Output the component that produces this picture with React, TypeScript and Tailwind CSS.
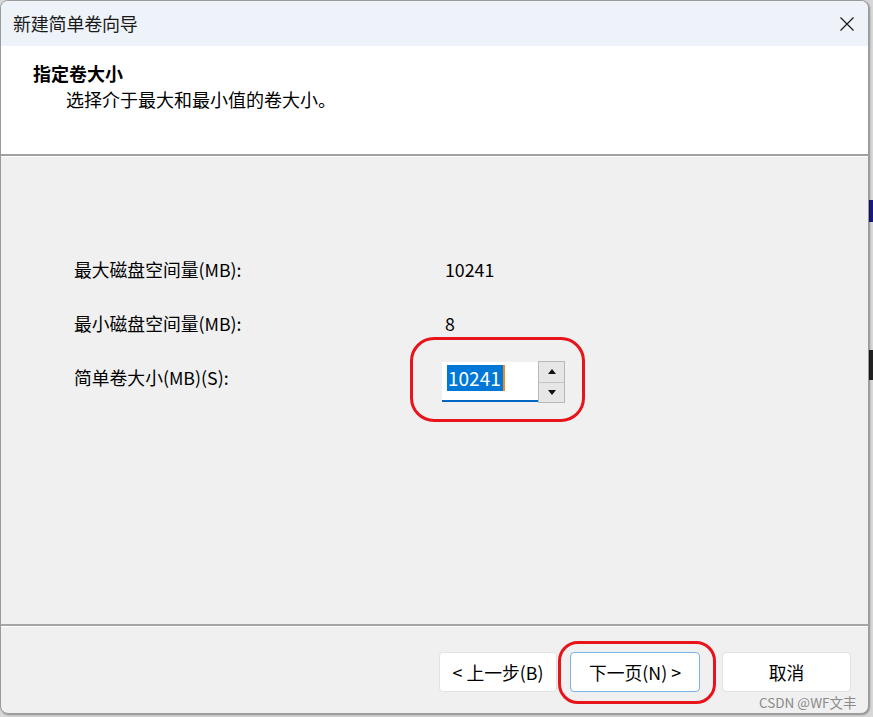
import React from "react";

const font = { fontFamily: '"Noto Sans CJK SC", "Noto Sans", sans-serif' };

export default function App() {
  return (
    <div className="relative w-[873px] h-[717px] bg-[#d8d8d8] overflow-hidden" style={font}>
      <div className="absolute right-0 top-[200px] w-[4px] h-[22px] bg-[#1a1a80]" />
      <div className="absolute right-0 top-[350px] w-[4px] h-[30px] bg-[#222]" />
      <div className="relative z-10 w-[869px] h-[714px] rounded-lg border border-[#9a9a9a] bg-[#f0f0f0] flex flex-col overflow-hidden shadow-[1px_1px_2px_rgba(0,0,0,0.35)]">
        {/* title bar */}
        <div className="h-[45px] bg-[#eef3f9] flex items-center justify-between pl-[12px] pr-[12px] shrink-0">
          <span className="text-[18px] text-[#1a1a1a] tracking-[-0.2px]">新建简单卷向导</span>
          <svg width="16" height="16" viewBox="0 0 16 16" className="mr-[1px]">
            <path d="M1.5 1.5 L14.5 14.5 M14.5 1.5 L1.5 14.5" stroke="#1a1a1a" strokeWidth="1.2" fill="none" />
          </svg>
        </div>
        {/* header */}
        <div className="h-[108px] bg-white shrink-0 pl-[32px] pt-[15px]">
          <div className="text-[18px] font-bold text-black leading-[24px]">指定卷大小</div>
          <div className="text-[18px] text-black leading-[24px] pl-[33px] mt-[2px]">选择介于最大和最小值的卷大小。</div>
        </div>
        <div className="h-[2px] bg-[#a0a0a0] shrink-0" />
        <div className="h-[1px] bg-white shrink-0" />
        {/* body */}
        <div className="flex-1 pl-[73px] pt-[100px]">
          <div className="flex items-center h-[24px] text-[17.8px] text-black">
            <span className="w-[371px]">最大磁盘空间量(MB):</span>
            <span>10241</span>
          </div>
          <div className="flex items-center h-[24px] mt-[30px] text-[17.8px] text-black">
            <span className="w-[371px]">最小磁盘空间量(MB):</span>
            <span>8</span>
          </div>
          <div className="flex items-start mt-[30px] text-[17.8px] text-black">
            <span className="w-[368px] h-[24px] flex items-center">简单卷大小(MB)(S):</span>
            <div className="flex -mt-[3px]">
              <div className="w-[96px] h-[40px] bg-white border-b-2 border-[#0067c0] pl-[5px] pt-[3px]">
                <span className="inline-block bg-[#0078d7] text-white text-[19px] leading-[26px] pl-[1px] pr-[2px] border-r-2 border-[#f08a24]">10241</span>
              </div>
              <div className="w-[27px] h-[42px] -mt-[1px] border border-[#b8b8b8] bg-[#e6e6e6] flex flex-col">
                <div className="flex-1 flex items-center justify-center border-b border-[#c4c4c4]">
                  <svg width="8" height="5" viewBox="0 0 8 5"><path d="M4 0 L8 5 L0 5 Z" fill="#111" /></svg>
                </div>
                <div className="flex-1 flex items-center justify-center">
                  <svg width="8" height="5" viewBox="0 0 8 5"><path d="M0 0 L8 0 L4 5 Z" fill="#111" /></svg>
                </div>
              </div>
            </div>
          </div>
        </div>
        {/* footer separator */}
        <div className="h-[2px] bg-[#a6a6a6] shrink-0" />
        <div className="h-[1px] bg-white shrink-0" />
        <div className="h-[86px] shrink-0 flex items-start justify-end pr-[17px] pt-[25px]">
          <button className="w-[118px] h-[40px] bg-white border border-[#e2e2e2] rounded-[4px] text-[17.8px] text-black">&lt; 上一步(B)</button>
          <button className="ml-[13px] w-[130px] h-[40px] bg-white border border-[#7ab3e6] rounded-[4px] text-[17.8px] text-black">下一页(N) &gt;</button>
          <button className="ml-[22px] w-[129px] h-[40px] bg-white border border-[#e2e2e2] rounded-[4px] text-[17.8px] text-black">取消</button>
        </div>
      </div>
      {/* annotations */}
      <div className="absolute z-20 left-[410px] top-[337px] w-[175px] h-[85px] border-[3px] border-[#e8141c] rounded-[24px]" />
      <div className="absolute z-20 left-[558px] top-[641px] w-[158px] h-[63px] border-[3px] border-[#e8141c] rounded-[20px]" />
      <div className="absolute z-20 left-[759px] top-[693px] text-[13.5px] text-[#8a8a8a] leading-[18px]">CSDN @WF文丰</div>
    </div>
  );
}
